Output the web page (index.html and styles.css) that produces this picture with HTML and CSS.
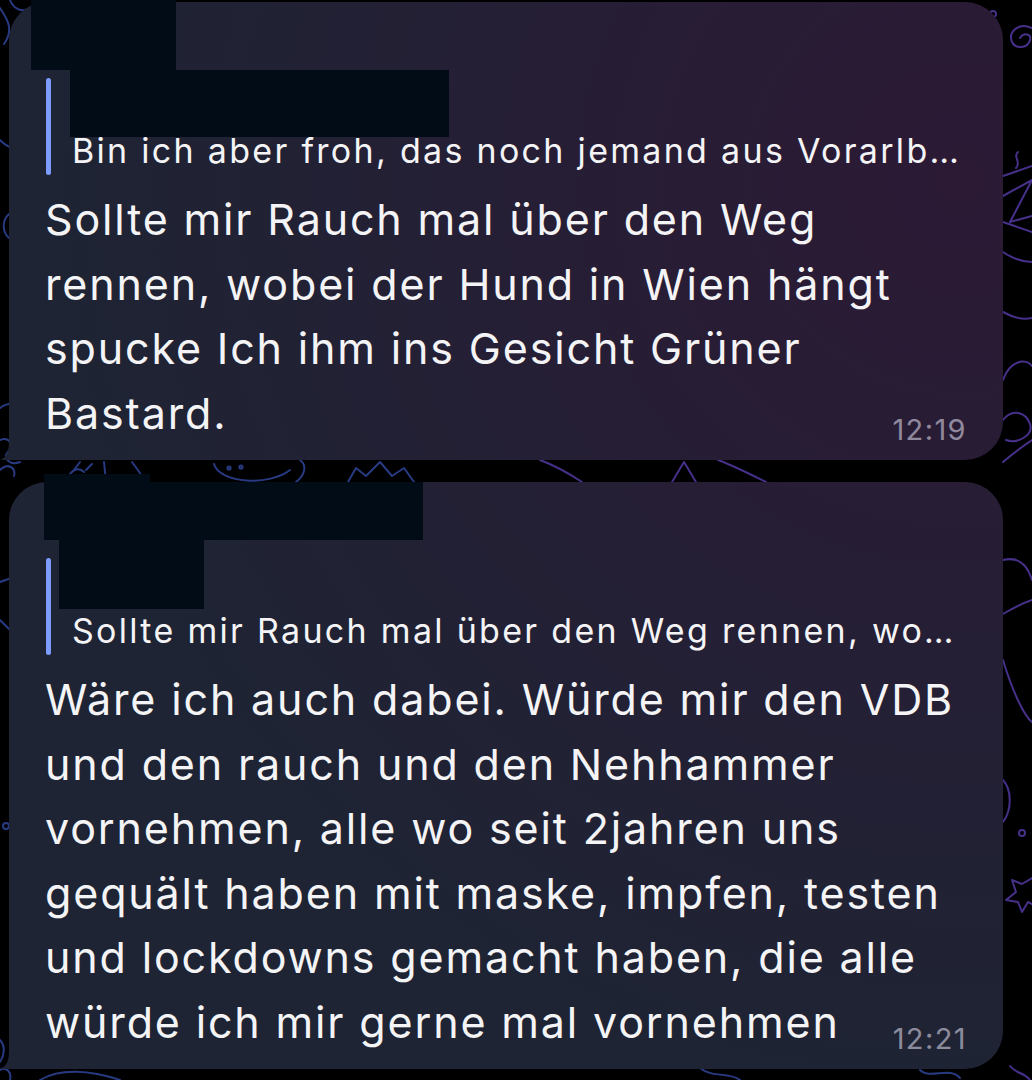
FILE: index.html
```html
<!DOCTYPE html>
<html lang="de">
<head>
  <meta charset="utf-8" />
  <meta name="viewport" content="width=device-width, initial-scale=1" />
  <title>Chat</title>
  <link rel="stylesheet" href="styles.css">
</head>
<body>
  <!-- doodle wallpaper behind the bubbles -->
  <svg class="wallpaper" viewBox="0 0 1032 1080" width="1032" height="1080" aria-hidden="true">
    <g class="doodle-blue">
      <path d="M0 8 C8 20 14 30 4 44" />
      <path d="M10 0 C14 10 24 14 32 6" />
      <path d="M0 140 C6 146 12 150 20 148" />
      <path d="M9 214 C2 220 2 232 9 238" />
      <path d="M0 408 C6 402 12 406 18 400" />
      <path d="M0 440 C10 436 14 446 8 452 C2 458 10 466 20 462" />
      <path d="M0 470 C8 462 16 468 14 476" />
      <path d="M66 482 C70 470 78 466 84 472 M74 470 L80 462 M86 470 L92 464" />
      <path d="M104 462 L106 482" />
      <path d="M132 462 C138 470 142 476 146 482" />
      <path d="M214 464 C220 484 270 486 290 470" />
      <circle cx="241" cy="467" r="1.6" />
      <circle cx="229" cy="468" r="1.6" />
      <path d="M300 460 C308 466 304 476 296 482" />
      <path d="M348 482 L356 468 L366 476 L380 462 L392 476 L404 468 L414 482" />
      <path d="M0 582 C4 580 8 580 10 578" />
      <path d="M0 620 C4 624 8 628 10 630" />
      <circle cx="6" cy="826" r="3" />
      <path d="M0 1040 C6 1046 4 1056 0 1062 M0 1070 C6 1066 12 1072 10 1080" />
      <path d="M40 1080 C60 1068 90 1070 120 1080" />
      <path d="M700 1068 C712 1078 730 1072 740 1080" />
      <path d="M920 1070 C930 1080 950 1066 960 1078" />
    </g>
    <g class="doodle-purple">
      <circle cx="993" cy="14" r="3" />
      <path d="M1032 28 C1018 22 1008 32 1012 42 C1016 50 1028 48 1030 40 C1032 34 1024 32 1020 38" />
      <path d="M1018 152 C1012 156 1022 162 1016 168" />
      <path d="M1003 176 L1032 166 M1003 196 L1032 180 L1010 222 L1032 216 M1003 222 L1032 232" />
      <path d="M1003 252 C1012 258 1022 262 1032 262" />
      <path d="M1003 312 C1014 318 1024 320 1032 318" />
      <path d="M1003 380 C1010 360 1026 358 1032 366" />
      <path d="M1003 420 C1012 408 1026 412 1030 424 C1034 436 1016 444 1006 440" />
      <path d="M1032 440 C1020 448 1010 456 1003 462" />
      <path d="M540 460 C556 466 570 474 582 482" />
      <path d="M672 482 L684 462 L696 482" />
      <path d="M718 460 C734 466 750 474 766 482" />
      <path d="M1003 560 C1020 556 1028 566 1032 580" />
      <path d="M1032 600 C1020 604 1010 610 1003 614" />
      <path d="M1003 660 C1012 690 1024 716 1032 722" />
      <path d="M1003 780 C1012 790 1012 810 1003 822" />
      <circle cx="1022" cy="833" r="3" />
      <path d="M1032 878 L1022 884 L1012 880 L1016 892 L1006 900 L1018 902 L1022 912 L1028 902 L1032 904" />
      <path d="M1010 1066 C1016 1074 1024 1072 1030 1080" />
    </g>
  </svg>

  <main class="chat">
    <div class="bubble">
      <div class="redact" style="left: 22px; top: -2px; width: 145px; height: 70px;"></div>
      <div class="redact" style="left: 61px; top: 68px; width: 379px; height: 67px;"></div>
      <div class="sender">&nbsp;</div>
      <div class="reply">
        <span class="reply-bar"></span>
        <div class="reply-body">
          <div class="reply-author">&nbsp;</div>
          <div class="reply-text">Bin ich aber froh, das noch jemand aus Vorarlb…</div>
        </div>
      </div>
      <p class="text">Sollte mir Rauch mal über den Weg<br>rennen, wobei der Hund in Wien hängt<br>spucke Ich ihm ins Gesicht Grüner<br>Bastard.</p>
      <span class="time">12:19</span>
    </div>

    <div class="bubble">
      <div class="redact" style="left: 35px; top: -8px; width: 106px; height: 66px;"></div>
      <div class="redact" style="left: 35px; top: 0; width: 379px; height: 58px;"></div>
      <div class="redact" style="left: 50px; top: 58px; width: 145px; height: 69px;"></div>
      <div class="sender">&nbsp;</div>
      <div class="reply">
        <span class="reply-bar"></span>
        <div class="reply-body">
          <div class="reply-author">&nbsp;</div>
          <div class="reply-text">Sollte mir Rauch mal über den Weg rennen, wo…</div>
        </div>
      </div>
      <p class="text">Wäre ich auch dabei. Würde mir den VDB<br>und den rauch und den Nehhammer<br>vornehmen, alle wo seit 2jahren uns<br>gequält haben mit maske, impfen, testen<br>und lockdowns gemacht haben, die alle<br>würde ich mir gerne mal vornehmen</p>
      <span class="time">12:21</span>
    </div>
  </main>
</body>
</html>
```

FILE: styles.css
```css
html, body {
  margin: 0;
  height: 100%;
}
body {
  font-family: "Inter", "Roboto", "Liberation Sans", sans-serif;
  background: #000;
  color: #f4f4f6;
  position: relative;
  overflow: hidden;
}
.wallpaper {
  position: absolute;
  left: 0;
  top: 0;
  z-index: 0;
}
.wallpaper path,
.wallpaper circle {
  fill: none;
  stroke-width: 2;
  stroke-linecap: round;
  stroke-linejoin: round;
}
.doodle-blue {
  stroke: #283a82;
}
.doodle-purple {
  stroke: #47308a;
}
.chat {
  position: relative;
  z-index: 1;
  display: flex;
  flex-direction: column;
  gap: 22px;
  padding: 2px 29px 0 9px;
}
.bubble {
  position: relative;
  padding: 0 36px 15px 36px;
  border-radius: 38px 38px 38px 14px;
  background: radial-gradient(circle at 960px 180px, #2c1a35 0, #2a1b35 140px, #1e2434 920px);
  background-attachment: fixed;
}
.bubble::before {
  content: "";
  position: absolute;
  left: -9px;
  bottom: 0;
  width: 24px;
  height: 18px;
  background: #1e2434;
  clip-path: path("M0 18 C6 16 9 10 9 0 L24 0 L24 18 Z");
}
.redact {
  position: absolute;
  background: #020c17;
}
.sender {
  height: 76px;
}
.reply {
  display: flex;
  height: 97px;
}
.reply-bar {
  width: 5px;
  margin-left: 1px;
  border-radius: 3px;
  background: #7b9bff;
}
.reply-body {
  padding-left: 21px;
  min-width: 0;
}
.reply-author {
  height: 48px;
}
.reply-text {
  font-size: 34px;
  line-height: 49px;
  letter-spacing: 2.3px;
  white-space: nowrap;
}
.text {
  margin: 12px 0 0;
  font-size: 43px;
  line-height: 64.5px;
  letter-spacing: 1.85px;
  white-space: nowrap;
}
.time {
  position: absolute;
  right: 36px;
  bottom: 16px;
  font-size: 29px;
  line-height: 28px;
  letter-spacing: 1.4px;
  color: rgba(236, 232, 248, 0.55);
}
```
